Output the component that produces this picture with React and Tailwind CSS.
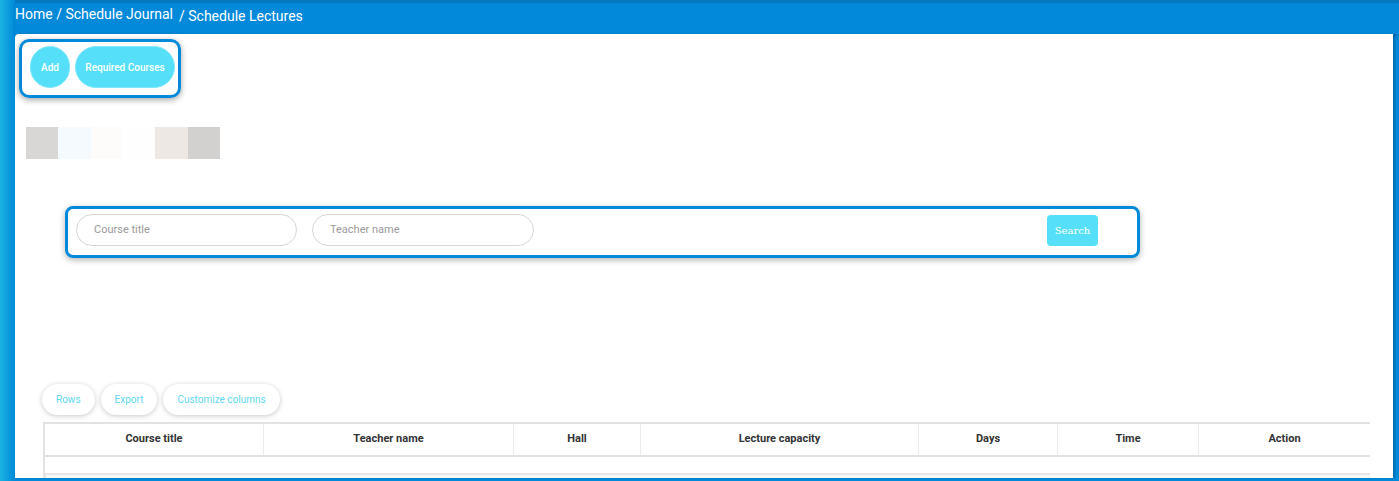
import React from 'react';

const swatches = [
  'w-[32px] bg-[#d8d7d6]',
  'w-[33px] bg-[#f5faff]',
  'w-[31px] bg-[#fdfcfa]',
  'w-[33px] bg-[#fefefe]',
  'w-[33px] bg-[#ede8e4]',
  'w-[32px] bg-[#d2d1d0]',
];

const columns = [
  { label: 'Course title', w: 'w-[219px]' },
  { label: 'Teacher name', w: 'w-[250px]' },
  { label: 'Hall', w: 'w-[127px]' },
  { label: 'Lecture capacity', w: 'w-[278px]' },
  { label: 'Days', w: 'w-[139px]' },
  { label: 'Time', w: 'w-[141px]' },
  { label: 'Action', w: 'flex-1' },
];

const ToolButton = ({ children }) => (
  <button className="h-[31px] px-[14px] rounded-full bg-white text-[10px] text-[#5fd8f2] shadow-[0_1px_5px_rgba(0,0,0,0.22)]">
    {children}
  </button>
);

export default function App() {
  return (
    <div className="h-[481px] w-[1399px] overflow-hidden bg-[#0289d9] flex font-['Roboto',sans-serif]">
      <div className="w-[15px] h-full bg-gradient-to-r from-[#1bb3e3] to-[#0289d9]" />
      <div className="flex-1 flex flex-col">
        <div className="h-[34px] shrink-0 flex items-start pt-[1px] text-white text-[14px] shadow-[0_3px_3px_rgba(0,0,0,0.12)] border-t-[3px] border-[#0479be]">
          <span>Home / Schedule Journal</span>
          <span className="ml-[6px] mt-[2px]">/ Schedule Lectures</span>
        </div>
        <div className="w-[1378px] h-[444px] shrink-0 overflow-hidden bg-white rounded-tl-[4px] shadow-[2px_0_2px_rgba(0,0,0,0.2)]">
          <div className="pt-[5px] pl-[4px]">
            <div className="inline-flex items-center gap-[5px] border-[3px] border-[#0289d9] rounded-[10px] pl-[8px] pr-[3px] pt-[4px] pb-[7px] shadow-[0_2px_6px_rgba(0,0,0,0.35)]">
              <button className="w-[40px] h-[42px] rounded-full bg-[#55dff9] border border-[#7fe8fb] text-white text-[10px] font-medium">Add</button>
              <button className="w-[100px] h-[42px] rounded-full bg-[#55dff9] border border-[#7fe8fb] text-white text-[10px] font-medium">Required Courses</button>
            </div>
          </div>

          <div className="flex mt-[29px] ml-[11px]">
            {swatches.map((c, i) => (
              <div key={i} className={`h-[32px] ${c}`} />
            ))}
          </div>

          <div className="mt-[47px] ml-[50px] w-[1075px] h-[52px] border-[3px] border-[#0289d9] rounded-[8px] flex items-start pt-[5px] pl-[8px] pr-[39px] shadow-[0_2px_6px_rgba(0,0,0,0.3)]">
            <div className="w-[221px] h-[32px] rounded-full border border-[#d6d6d6] flex items-center pl-[17px] text-[11px] text-[#9a9a9a]">Course title</div>
            <div className="ml-[15px] w-[222px] h-[32px] rounded-full border border-[#d6d6d6] flex items-center pl-[17px] text-[11px] text-[#9a9a9a]">Teacher name</div>
            <button className="ml-auto mt-[1px] w-[51px] h-[31px] rounded-[4px] bg-[#55dff9] text-white text-[10px] font-['DejaVu_Serif',serif]">Search</button>
          </div>

          <div className="mt-[126px] ml-[27px] flex gap-[6px]">
            <ToolButton>Rows</ToolButton>
            <ToolButton>Export</ToolButton>
            <ToolButton>Customize columns</ToolButton>
          </div>

          <div className="mt-[7px] ml-[28px] w-[1327px] border-t-[2px] border-l-[2px] border-[#e2e2e2]">
            <div className="flex h-[33px] border-b-[2px] border-[#e2e2e2]">
              {columns.map((c, i) => (
                <div
                  key={c.label}
                  className={`${c.w} flex items-center justify-center text-[11px] font-bold text-[#333] ${i < columns.length - 1 ? 'border-r border-[#ececec]' : ''}`}
                >
                  {c.label}
                </div>
              ))}
            </div>
            <div className="h-[18px] border-b-[2px] border-[#e6e6e6]" />
            <div className="h-[10px] bg-[#f7f7f7] border-l border-[#e6e6e6]" />
          </div>
        </div>
      </div>
    </div>
  );
}
